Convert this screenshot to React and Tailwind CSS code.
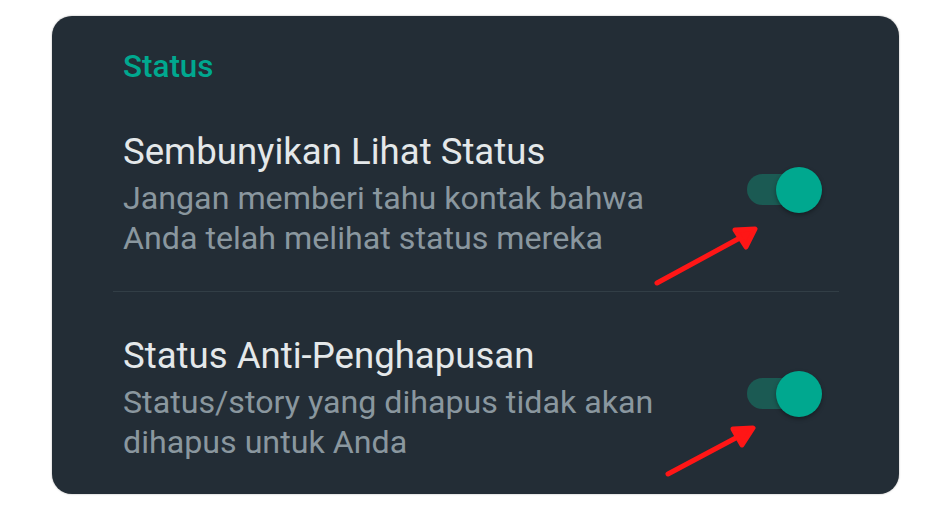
import React from "react";

function Toggle() {
    return (
        <div className="relative w-[75px] h-[46px] shrink-0">
            <div className="absolute left-0 top-[7px] w-[62px] h-[31px] rounded-full bg-[#1b5a53]" />
            <div className="absolute right-0 top-0 w-[46px] h-[46px] rounded-full bg-[#00a88f] shadow-[0_2px_4px_rgba(0,0,0,0.35)]" />
        </div>
    );
}

function SettingRow({ title, lines }) {
    return (
        <div className="flex items-start pl-[71px] pr-[77px]">
            <div className="flex-1">
                <div className="text-[36.6px] leading-[44px] text-[#e4e8ea]">{title}</div>
                <div className="mt-[4px] text-[32.2px] leading-[40px] text-[#8a979f]">
                    {lines[0]}
                    <br />
                    {lines[1]}
                </div>
            </div>
            <div className="mt-[37px]">
                <Toggle />
            </div>
        </div>
    );
}

function Arrow({ x1, y1, x2, y2, a, b }) {
    return (
        <g stroke="#ff1616" strokeWidth="5" strokeLinecap="round" strokeLinejoin="round" fill="#ff1616">
            <line x1={x1} y1={y1} x2={x2 - 6} y2={y2 + 4} />
            <polygon points={`${x2},${y2} ${a[0]},${a[1]} ${b[0]},${b[1]}`} />
        </g>
    );
}

export default function App() {
    return (
        <div className="relative w-[950px] h-[510px] bg-white pt-[16px] pl-[52px] font-['Roboto',sans-serif]">
            <div className="w-[847px] h-[478px] rounded-[20px] bg-[#232d36] shadow-[0_0_2px_rgba(0,0,0,0.35)] pt-[31px]">
                <div className="pl-[71px] text-[31.4px] leading-[40px] font-medium text-[#00a88f]">Status</div>
                <div className="mt-[43px]">
                    <SettingRow
                        title="Sembunyikan Lihat Status"
                        lines={["Jangan memberi tahu kontak bahwa", "Anda telah melihat status mereka"]}
                    />
                </div>
                <div className="mt-[33px] ml-[61px] mr-[60px] h-px bg-[#323e46]" />
                <div className="mt-[42px]">
                    <SettingRow
                        title="Status Anti-Penghapusan"
                        lines={["Status/story yang dihapus tidak akan", "dihapus untuk Anda"]}
                    />
                </div>
            </div>
            <svg className="absolute inset-0 pointer-events-none" width="950" height="510" viewBox="0 0 950 510">
                <Arrow x1={657} y1={283} x2={755} y2={229} a={[735, 230]} b={[746, 247]} />
                <Arrow x1={668} y1={474} x2={753} y2={428} a={[733, 429]} b={[742, 445]} />
            </svg>
        </div>
    );
}
